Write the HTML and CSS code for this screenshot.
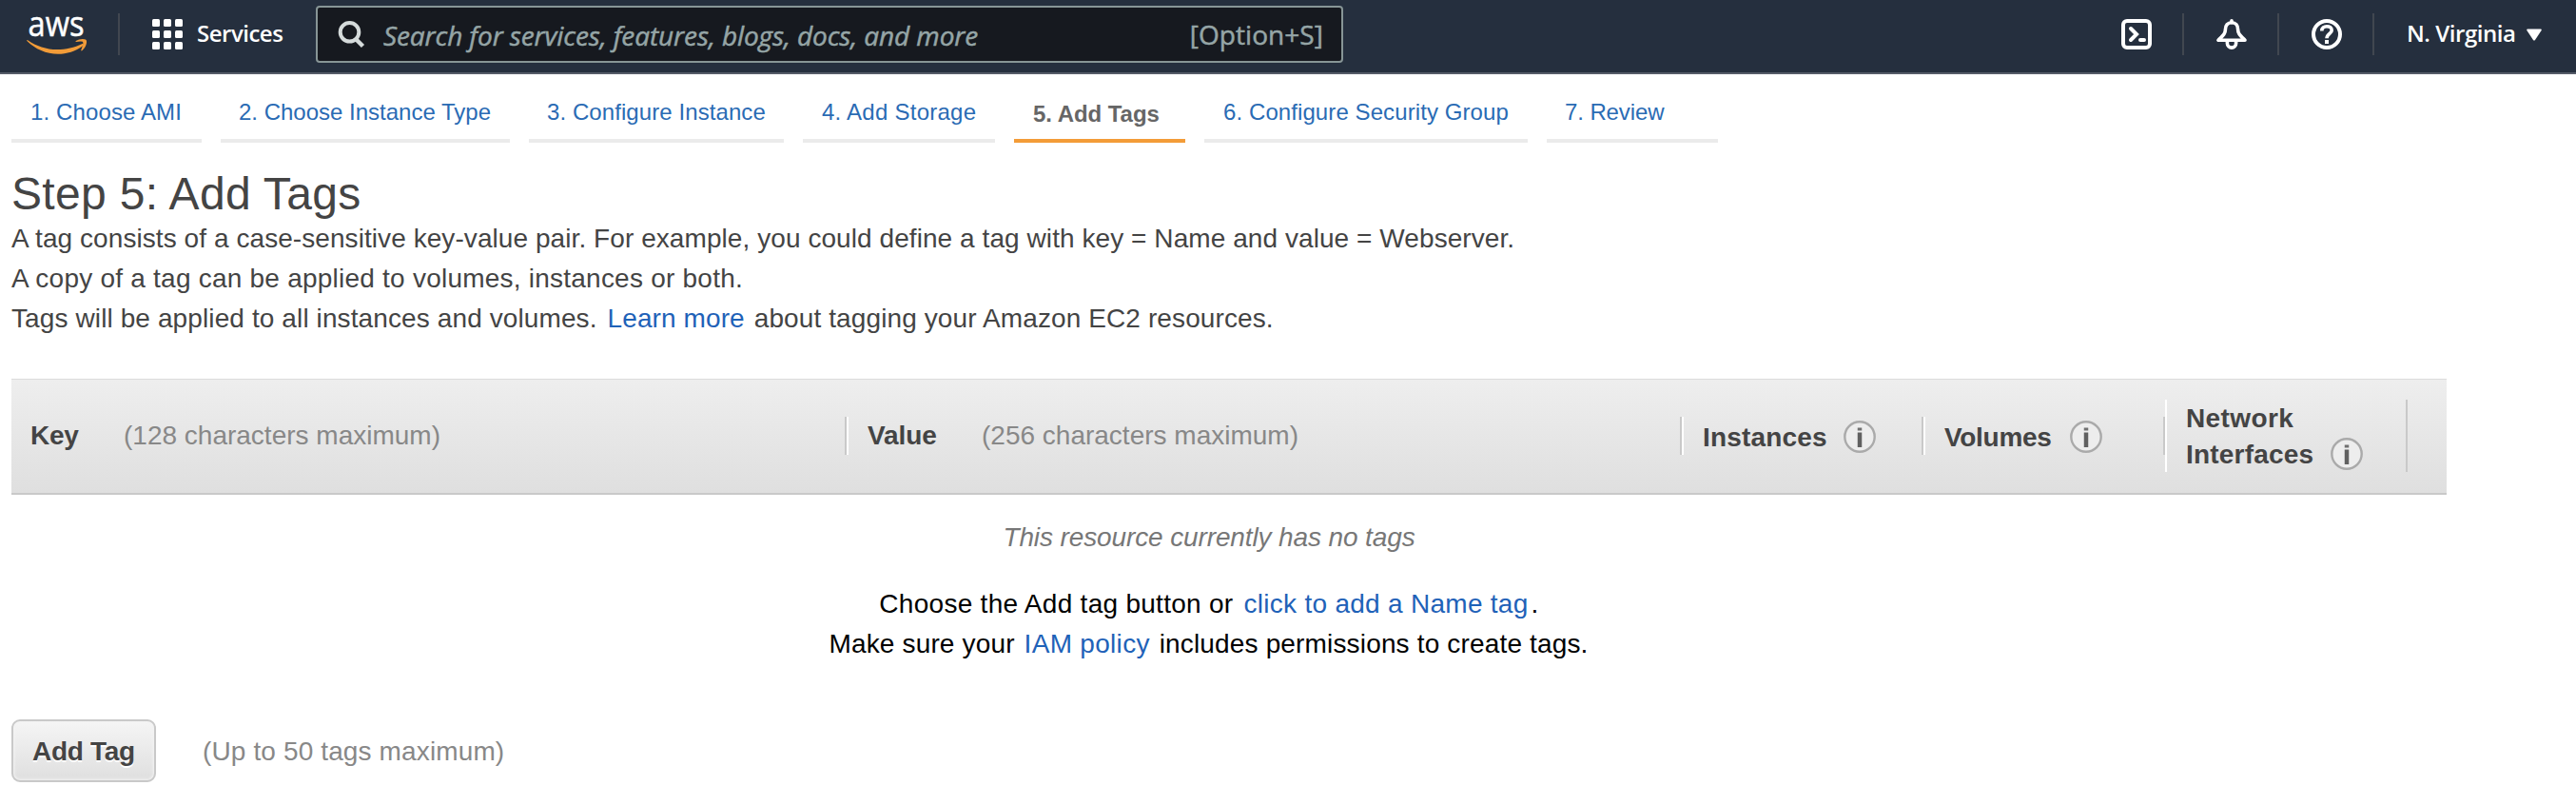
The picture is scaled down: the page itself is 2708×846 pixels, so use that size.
FILE: index.html
```html
<!DOCTYPE html>
<html lang="en">
<head>
<meta charset="utf-8">
<title>Step 5: Add Tags</title>
<link rel="stylesheet" href="styles.css">
</head>
<body>
<header class="topbar">
  <a class="logo" aria-label="aws">
    <svg width="66" height="72" viewBox="0 -14 66 72">
      <text class="logo-text" x="1.500" y="24" textLength="59" lengthAdjust="spacingAndGlyphs">aws</text>
      <g fill="#f19b38" transform="translate(0 -1)">
        <path d="M1.200 29.200C10 35.500 21 39 32 39c9 0 18.500-1.900 26-5.800 1.600-.7 2.300.9 1 2C51.500 40.800 42 43.800 33 43.800 20.500 43.800 9 38.500.6 30.300c-.7-.7-.2-1.500.6-1.100z"/>
        <path d="M51.800 30c3-2.200 8-2.600 10.200-1.500 2.400 1.300.6 8-3.500 11.600-.8.6-1.500.2-1.200-.6 1-2.400 2.700-7 1.800-8.200-.9-1.100-4.500-.6-6.800-.3-.8.100-1-.6-.5-1z"/>
      </g>
    </svg>
  </a>
  <span class="divider"></span>
  <a class="services">
    <svg width="32" height="32" viewBox="0 0 32 32" fill="#fff">
      <rect x="0" y="0" width="8" height="8" rx="1.500"/><rect x="12" y="0" width="8" height="8" rx="1.500"/><rect x="24" y="0" width="8" height="8" rx="1.500"/>
      <rect x="0" y="12" width="8" height="8" rx="1.500"/><rect x="12" y="12" width="8" height="8" rx="1.500"/><rect x="24" y="12" width="8" height="8" rx="1.500"/>
      <rect x="0" y="24" width="8" height="8" rx="1.500"/><rect x="12" y="24" width="8" height="8" rx="1.500"/><rect x="24" y="24" width="8" height="8" rx="1.500"/>
    </svg>
    <span class="services-label">Services</span>
  </a>
  <div class="search">
    <svg class="search-icon" width="30" height="30" viewBox="0 0 30 30" fill="none" stroke="#d5dbdb">
      <circle cx="13.500" cy="12.800" r="9.800" stroke-width="4"/>
      <path d="M20 20l7.500 7.500" stroke-width="4.500"/>
    </svg>
    <span class="search-hint">Search for services, features, blogs, docs, and more</span>
    <span class="search-key">[Option+S]</span>
  </div>
  <nav class="tools">
    <svg class="tool" width="32" height="32" viewBox="0 0 32 32" fill="none" stroke="#fff" stroke-width="4">
      <rect x="2" y="2" width="28" height="28" rx="4"/>
      <path d="M10 10l6 6-6 6M20 22h4" stroke-linecap="round" stroke-linejoin="miter"/>
    </svg>
    <span class="divider"></span>
    <svg class="tool" width="32" height="32" viewBox="0 0 32 32" fill="none" stroke="#fff" stroke-width="3.600" stroke-linejoin="round">
      <path d="M16 1.800v2" stroke-linecap="round"/>
      <path d="M16 3.800c-4.200 0-6.600 2.700-6.600 7.200 0 4.200-1.900 5.700-7.400 11.200h28c-5.500-5.500-7.400-7-7.400-11.200 0-4.500-2.400-7.200-6.600-7.200z"/>
      <path d="M11.400 23v2.500a4.600 4.600 0 0 0 9.200 0V23"/>
    </svg>
    <span class="divider"></span>
    <svg class="tool" width="32" height="32" viewBox="0 0 32 32" fill="none" stroke="#fff" stroke-width="4">
      <circle cx="16" cy="16" r="14"/>
      <path d="M10.800 12.400c0-3.300 2.200-4.700 5.200-4.700s5.200 1.500 5.200 4.200c0 3.300-5.200 3.700-5.200 8.300" stroke-width="3.600"/>
      <path d="M14 24h4"/>
    </svg>
    <span class="divider"></span>
    <a class="region"><span class="region-label">N. Virginia</span>
      <svg width="16" height="13" viewBox="0 0 16 13"><path fill="#fff" d="M1.200.5h13.600c1 0 1.300.7.800 1.500L9 12c-.6.800-1.400.8-2 0L.4 2C-.1 1.200.2.5 1.200.5z"/></svg>
    </a>
  </nav>
</header>
<main class="page">
  <ol class="steps">
    <li class="step s1"><a>1. Choose AMI</a></li>
    <li class="step s2"><a>2. Choose Instance Type</a></li>
    <li class="step s3"><a>3. Configure Instance</a></li>
    <li class="step s4"><a>4. Add Storage</a></li>
    <li class="step s5 active"><span>5. Add Tags</span></li>
    <li class="step s6"><a>6. Configure Security Group</a></li>
    <li class="step s7"><a>7. Review</a></li>
  </ol>
  <h1 class="title">Step 5: Add Tags</h1>
  <div class="intro">
    <p class="intro-a">A tag consists of a case-sensitive key-value pair. For example, you could define a tag with key = Name and value = Webserver.</p>
    <p class="intro-b">A copy of a tag can be applied to volumes, instances or both.</p>
    <p class="intro-c">Tags will be applied to all instances and volumes. <a class="link">Learn more</a> about tagging your Amazon EC2 resources.</p>
  </div>
  <div class="tag-head">
    <div class="cell key"><b>Key</b><span class="muted">(128 characters maximum)</span></div>
    <div class="cell value"><b>Value</b><span class="muted">(256 characters maximum)</span></div>
    <div class="cell flag"><b class="instances">Instances</b><svg class="info" width="34" height="34" viewBox="0 0 34 34"><circle cx="17" cy="17" r="15.700" fill="#ededed" stroke="#aaa" stroke-width="2.400"/><path d="M17 12.500V28" stroke="#606060" stroke-width="4.500"/><path d="M17 7.500V10.500" stroke="#707070" stroke-width="4.500"/></svg></div>
    <div class="cell flag"><b class="volumes">Volumes</b><svg class="info" width="34" height="34" viewBox="0 0 34 34"><circle cx="17" cy="17" r="15.700" fill="#ededed" stroke="#aaa" stroke-width="2.400"/><path d="M17 12.500V28" stroke="#606060" stroke-width="4.500"/><path d="M17 7.500V10.500" stroke="#707070" stroke-width="4.500"/></svg></div>
    <div class="cell network"><b class="net">Network</b><div class="net-row"><b class="interfaces">Interfaces</b><svg class="info" width="34" height="34" viewBox="0 0 34 34"><circle cx="17" cy="17" r="15.700" fill="#ededed" stroke="#aaa" stroke-width="2.400"/><path d="M17 12.500V28" stroke="#606060" stroke-width="4.500"/><path d="M17 7.500V10.500" stroke="#707070" stroke-width="4.500"/></svg></div></div>
  </div>
  <div class="empty">
    <p class="none">This resource currently has no tags</p>
    <p class="choose">Choose the Add tag button or <a class="link">click to add a Name tag</a>.</p>
    <p class="policy">Make sure your <a class="link">IAM policy</a> includes permissions to create tags.</p>
  </div>
  <div class="actions">
    <button class="add" type="button">Add Tag</button>
    <span class="muted limit">(Up to 50 tags maximum)</span>
  </div>
</main>
</body>
</html>
```

FILE: styles.css
```css
* { box-sizing: border-box; }

body {
  margin: 0;
  background: #fff;
  color: #444;
  font-family: "Liberation Sans", Arial, sans-serif;
  font-size: 28px;
  line-height: 42px;
}

p, h1, ol { margin: 0; padding: 0; }
.link { color: #1f62b8; }
.muted { color: #888; }

/* Top bar */
.topbar {
  display: flex;
  align-items: center;
  height: 78px;
  padding: 0 36px 4px 28px;
  border-bottom: 2px solid #555b68;
  background: #252f3e;
  color: #fff;
  font-family: "Open Sans", "Noto Sans", sans-serif;
}
.topbar svg { display: block; flex: none; }
.logo { width: 96px; }
.logo svg { overflow: visible; }
.logo-text { fill: #fff; stroke: #fff; stroke-width: 0.5px; font: 500 37px "Open Sans", sans-serif; }
.divider { flex: none; width: 2px; height: 44px; background: #414750; }
.services { display: flex; align-items: center; gap: 15px; width: 206px; padding-left: 34px; font-size: 24px; }
.services-label { padding-bottom: 2px; font-weight: 600; letter-spacing: -0.5px; }
.search {
  display: flex;
  align-items: center;
  width: 1080px;
  height: 60px;
  padding: 0 19px 0 20px;
  border: 2px solid #879596;
  border-radius: 4px;
  background: #16191f;
  color: #95a5a6;
  font-weight: 500;
  line-height: 54px;
  -webkit-text-stroke: 0.5px #95a5a6;
}
.search-icon { margin-right: 19px; }
.search-hint { padding-top: 2px; font-style: italic; letter-spacing: -0.1px; }
.search-key { margin-left: auto; letter-spacing: 0.05px; }
.tools { display: flex; align-items: center; gap: 32px; margin-left: auto; }
.divider + .tool { margin-left: 2px; }
.region { display: flex; align-items: center; gap: 11px; margin-left: 2px; font-size: 24px; }
.region-label { width: 115px; padding-bottom: 2px; font-weight: 600; letter-spacing: -0.45px; white-space: nowrap; }

/* Wizard steps */
.page { padding: 0 12px; }
.steps { display: flex; gap: 20px; list-style: none; font-size: 24px; line-height: 30px; }
.step { padding: 25px 0 13px 20px; border-bottom: 4px solid #ebebeb; color: #2a6bb4; white-space: nowrap; }
.active { padding: 27px 0 11px 20px; border-color: #f39c38; color: #666; font-weight: bold; }
.s1 { width: 200px; letter-spacing: 0.12px; }
.s2 { width: 304px; padding-left: 19px; }
.s3 { width: 268px; padding-left: 19px; letter-spacing: 0.08px; }
.s4 { width: 202px; letter-spacing: 0.25px; }
.s5 { width: 180px; letter-spacing: -0.05px; }
.s6 { width: 340px; letter-spacing: 0.09px; }
.s7 { width: 180px; padding-left: 19px; letter-spacing: -0.1px; }

/* Heading and description */
.title { margin-top: 28px; font-size: 48px; font-weight: normal; line-height: 52px; letter-spacing: 0.35px; }
.intro-a { letter-spacing: 0.07px; }
.intro-b { letter-spacing: 0.23px; }
.intro-c { letter-spacing: 0.11px; }
.intro-c .link { margin: 0 2px 0 3px; }

/* Tag table header */
.tag-head {
  display: grid;
  grid-template-columns: 878px 878px 254px 254px 255px;
  align-items: start;
  width: 2560px;
  height: 122px;
  margin-top: 42px;
  padding-top: 39px;
  border-top: 1px solid #dcdcdc;
  border-bottom: 2px solid #c9c9c9;
  background: linear-gradient(#eee, #dfdfdf);
}
.cell {
  display: flex;
  align-items: center;
  height: 40px;
  padding-left: 20px;
  border-right: 2px solid #c9c9c9;
  line-height: 40px;
}
.key b { width: 98px; letter-spacing: -0.3px; }
.value { border-left: 2px solid #fff; }
.value b { width: 120px; letter-spacing: -0.1px; }
.flag { padding: 2px 0 0 20px; border-left: 2px solid #fff; line-height: 38px; }
.flag b { padding-top: 2px; }
.instances { width: 148px; letter-spacing: 0.17px; }
.volumes { width: 132px; letter-spacing: -0.3px; }
.network { flex-direction: column; align-items: flex-start; height: 76px; margin-top: -18px; padding: 1px 0 0 20px; border-left: 2px solid #fff; line-height: 38px; }
.net { letter-spacing: 0.4px; }
.net-row { display: flex; align-items: center; }
.net-row .info { margin-bottom: 2px; }
.interfaces { width: 152px; letter-spacing: 0.2px; }
.info { display: block; }

/* Empty state */
.empty { width: 2518px; padding-top: 24px; text-align: center; color: #000; }
.none { margin-bottom: 28px; color: #777; font-style: italic; letter-spacing: -0.12px; }
.choose { letter-spacing: 0.28px; }
.choose .link { margin: 0 3px; }
.policy { padding-right: 1px; letter-spacing: 0.16px; }
.policy .link { margin: 0 2px; letter-spacing: 0.3px; }

/* Actions */
.actions { display: flex; align-items: center; gap: 49px; margin-top: 58px; }
.add {
  width: 152px;
  height: 66px;
  padding: 1px 0 0;
  border: 2px solid #c9c9c9;
  border-radius: 9px;
  background: linear-gradient(#f5f5f5, #dfdfdf);
  box-shadow: inset 0 0 3px 1px #f3f3f3;
  color: #444;
  font: bold 28px/61px "Liberation Sans", Arial, sans-serif;
  letter-spacing: -0.3px;
  text-shadow: 0 2px 0 #fff;
}
.limit { padding-top: 1px; letter-spacing: 0.13px; }
```
